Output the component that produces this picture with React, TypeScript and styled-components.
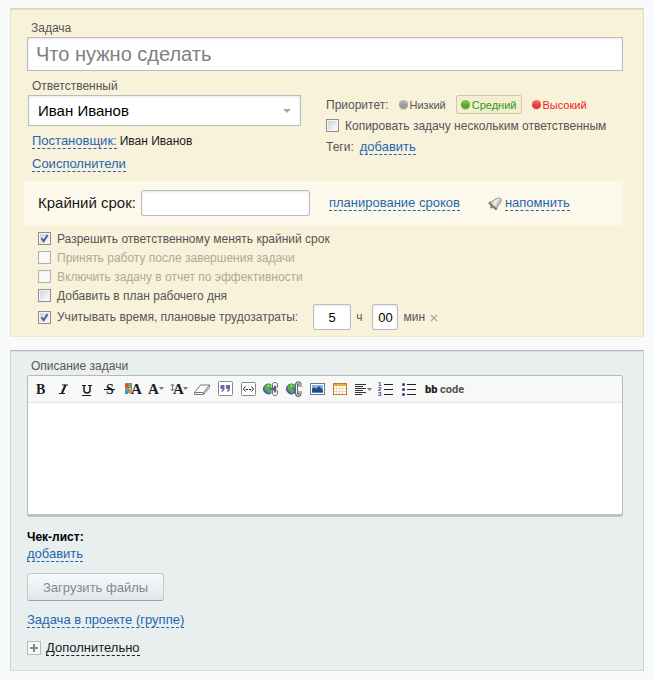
import React from "react";
import styled, { createGlobalStyle, css } from "styled-components";

const GlobalStyle = createGlobalStyle`
  * { box-sizing: border-box; }
  body {
    margin: 0;
    background: #f9fafc;
    color: #555;
    font: 12px/16px "Liberation Sans", Arial, sans-serif;
  }
  input, select, button, textarea { font-family: inherit; }
`;

const Form = styled.form`
  display: flex;
  flex-direction: column;
  gap: 13px;
  padding: 8px 10px;
`;

const Panel = styled.section<{ $tone: "sand" | "mist" }>`
  padding: 11px 20px 6px 16px;
  border: 1px solid;
  ${(p) =>
    p.$tone === "sand"
      ? css`
          background: #f8f2db;
          border-color: #dcd7b1 #e6e0c2 #efe8cb #e6e0c2;
          box-shadow: inset 0 1px 1px #e6e0bf;
        `
      : css`
          padding: 7px 20px 14px 16px;
          background: #e9efef;
          border-color: #b1b9ba #cdd3d4 #d3dbdc #cdd3d4;
          box-shadow: inset 0 1px 1px #d5dcdd;
        `}
`;

const FieldLabel = styled.label`
  display: block;
  padding: 0 4px;
`;

const boxed = css`
  border: 1px solid #b9bcc2;
  background: #fff;
  color: #000;
  box-shadow: inset 0 1px 3px #e6e6e8;
  outline: none;
`;

const TitleInput = styled.input`
  ${boxed}
  display: block;
  width: 100%;
  height: 34px;
  margin-top: 1px;
  padding: 0 8px;
  font-size: 20px;
  &::placeholder { color: #808080; opacity: 1; }
`;

const Columns = styled.div`
  display: grid;
  grid-template-columns: 274px 1fr;
  column-gap: 25px;
  margin-top: 7px;
`;

const Person = styled.div`
  padding-left: 1px;
`;

const SelectBox = styled.div`
  display: grid;
  align-items: center;
  margin-top: 1px;
  > * { grid-area: 1 / 1; }
  svg { justify-self: end; margin-right: 10px; pointer-events: none; }
`;

const PersonSelect = styled.select`
  ${boxed}
  appearance: none;
  width: 100%;
  height: 31px;
  padding: 0 9px;
  border-radius: 0;
  font-size: 15px;
`;

const Line = styled.div`
  display: flex;
  align-items: center;
  gap: 3px;
  margin-top: 7px;
  padding-left: 4px;
  color: #1a1a1a;
`;

const Link = styled.a<{ $dark?: boolean }>`
  color: ${(p) => (p.$dark ? "#1a1a1a" : "#1f67b0")};
  border-bottom: 1px dashed;
  font-size: 13px;
  line-height: 15px;
  text-decoration: none;
`;

const Options = styled.div`
  display: flex;
  flex-direction: column;
  padding-top: 17px;
`;

const Priorities = styled.div`
  display: flex;
  align-items: center;
  height: 19px;
  margin-bottom: 2px;
`;

const Priority = styled.button<{ $color: string; $active?: boolean }>`
  display: flex;
  align-items: center;
  gap: 2px;
  height: 19px;
  margin-left: 5px;
  padding: 0 4px;
  border: 1px solid ${(p) => (p.$active ? "#cfca9f" : "transparent")};
  border-radius: 2px;
  background: ${(p) => (p.$active ? "#f3efd0" : "transparent")};
  color: ${(p) => p.$color};
  font-size: 11px;
`;

const Dot = styled.span<{ $tone: string }>`
  width: 9px;
  height: 9px;
  border-radius: 50%;
  background: linear-gradient(#ffffff55, transparent 60%), ${(p) => p.$tone};
  box-shadow: 0 1px 1px #0002;
`;

const CheckLabel = styled.label<{ $off?: boolean }>`
  display: flex;
  align-items: center;
  gap: 6px;
  height: 19px;
  color: ${(p) => (p.$off ? "#aeaa98" : "#555")};
`;

const tick =
  "url(\"data:image/svg+xml,%3Csvg xmlns='http://www.w3.org/2000/svg' viewBox='0 0 11 11'%3E%3Cpath d='M2.5 5.2L4.7 8.3L8.6 2' fill='none' stroke='%234a5f97' stroke-width='2'/%3E%3C/svg%3E\")";

const Check = styled.input`
  appearance: none;
  flex: none;
  width: 13px;
  height: 13px;
  margin: 0;
  border: 1px solid #8e8f8f;
  background: linear-gradient(135deg, #c9ced6, #f4f5f6 75%);
  box-shadow: inset 0 0 0 1px #f4f4f4;
  &:checked { background: ${tick}, linear-gradient(135deg, #c9ced6, #f4f5f6 75%); }
  &:disabled { border-color: #b1b1b1; background: #f8f8f6; }
`;

const Tags = styled.div`
  display: flex;
  align-items: center;
  gap: 6px;
  height: 23px;
`;

const Deadline = styled.div`
  display: flex;
  align-items: center;
  height: 44px;
  margin: 9px 0 4px -3px;
  padding-left: 14px;
  background: #fdf9ea;
  > label { color: #1a1a1a; font-size: 15px; margin-right: 5px; }
`;

const TextInput = styled.input<{ $width: number; $center?: boolean }>`
  ${boxed}
  flex: none;
  width: ${(p) => p.$width}px;
  height: 26px;
  padding: 0 4px;
  border-radius: 2px;
  font-size: 13px;
  text-align: ${(p) => (p.$center ? "center" : "left")};
`;

const PlanLink = styled(Link)`
  margin: 0 28px 0 19px;
`;

const Remind = styled.span`
  display: flex;
  align-items: center;
  gap: 3px;
`;

const Checks = styled.div`
  padding-left: 11px;
`;

const TimeRow = styled.div`
  display: flex;
  align-items: center;
  height: 26px;
  margin-top: -1px;
`;

const Hours = styled.div`
  display: flex;
  align-items: center;
  margin-left: 15px;
  gap: 5px;
  > label:first-of-type { margin-right: 5px; }
`;

const ClearButton = styled.button`
  display: flex;
  padding: 2px 0 0;
  border: 0;
  background: none;
`;

const Editor = styled.div`
  margin-top: 1px;
  border: 1px solid #b4bac0;
  border-bottom: 3px solid #bfc2c3;
  border-radius: 3px;
  background: #fff;
`;

const Toolbar = styled.div`
  display: flex;
  height: 27px;
  padding-left: 1px;
  border-bottom: 1px solid #e4e6e6;
  border-radius: 3px 3px 0 0;
  background: #f8f8f8;
`;

const Tool = styled.button`
  display: flex;
  align-items: center;
  justify-content: center;
  width: 23px;
  padding: 0;
  border: 0;
  background: none;
`;

const CodeMode = styled.button`
  padding: 0 5px;
  border: 0;
  background: none;
  color: #555;
  font-weight: bold;
  font-size: 11px;
  white-space: nowrap;
  && { font-family: Roboto, sans-serif; }
  b { color: #222; }
`;

const TextArea = styled.textarea`
  display: block;
  width: 100%;
  height: 111px;
  padding: 8px;
  border: 0;
  outline: none;
  resize: none;
  background: transparent;
`;

const Heading = styled.h2`
  margin: 12px 0 1px;
  color: #000;
  font-size: 12px;
  line-height: 16px;
`;

const Upload = styled.button`
  display: block;
  height: 28px;
  margin: 11px 0;
  padding: 0 15px;
  border: 1px solid #c3cacc;
  border-bottom-color: #98a2a4;
  border-radius: 3px;
  background: linear-gradient(#f8fafa, #dfe7eb);
  color: #85878f;
  font-size: 13px;
`;

const More = styled.div`
  display: flex;
  align-items: center;
  gap: 5px;
  margin-top: 12px;
`;

const Expand = styled.button`
  display: flex;
  align-items: center;
  justify-content: center;
  width: 14px;
  height: 14px;
  padding: 0;
  border: 1px solid #b5babb;
  background: #fafafa;
`;

const Bell = () => (
  <svg width="14" height="15" viewBox="0 0 14 15" aria-hidden="true">
    <defs>
      <linearGradient id="bell" x1="0" y1="0.2" x2="1" y2="0.8">
        <stop offset="0.1" stopColor="#a9a89e" />
        <stop offset="0.45" stopColor="#f4f4f0" />
        <stop offset="0.85" stopColor="#9b9a92" />
      </linearGradient>
    </defs>
    <path d="M1 6.5C4 6.5 6 3 9 2.5C11 2 12.5 2 13 2.8C13.4 4 13 6 11.7 7.8C10 10 9 10.5 8.5 14Z" fill="url(#bell)" stroke="#96958c" />
    <path d="M1 6.8L8.3 13.6" stroke="#77766f" strokeWidth="2" />
    <circle cx="3.5" cy="11" r="1.5" fill="#8c8b80" />
  </svg>
);

const Letter = ({ x, size = 15, children }: { x: number; size?: number; children: string }) => (
  <text x={x} y="13" fontFamily="Liberation Serif" fontWeight="bold" fontSize={size} fill="#1c1c1c">{children}</text>
);

const Svg = ({ children, w = 16 }: { children: React.ReactNode; w?: number }) => (
  <svg width={w} height="16" viewBox={`0 0 ${w} 16`} aria-hidden="true">{children}</svg>
);

const Globe = ({ closed }: { closed?: boolean }) => (
  <Svg>
    <circle cx="5.5" cy="8" r="5" fill="#4a6bc8" stroke="#3a4c98" />
    <path d="M2 5L5 3L9 4L9 6L6 8L8 10L6 12.5L4 10L1.500 8Z" fill="#5cb82a" />
    <path d="M4 4L6 3.5L7 5L5 6Z" fill="#a6da7c" />
    {closed ? (
      <g fill="none">
        <path d="M10.5 7V3.5C10.5 1 14.5 1 14.5 3.5V7M10.5 9V12.5C10.5 15 14.5 15 14.5 12.5V9" stroke="#f8f8f8" strokeWidth="4" />
        <path d="M9.5 7V3.5C9.500 .8 14.5 .8 14.5 3.5V6C14.5 7.500 9.5 7.500 9.5 6M9.5 10C9.5 8.500 14.5 8.500 14.5 10V12.5C14.5 15.200 9.5 15.200 9.5 12.5V9.5" stroke="#6a6a6a" />
        <path d="M12 4.500V11.500" stroke="#4b4b4b" strokeWidth="1.5" />
      </g>
    ) : (
      <g fill="none">
        <path d="M14 6V3.5C14 1 10.5 1 10.5 3.5V12.5C10.5 15 14 15 14 12.5V10" stroke="#666" strokeWidth="3" />
        <path d="M14 6V3.5C14 1 10.5 1 10.5 3.5V12.5C10.5 15 14 15 14 12.5V10" stroke="#f4f4f4" />
      </g>
    )}
  </Svg>
);

const tools: { name: string; icon: React.ReactNode }[] = [
  { name: "Полужирный", icon: <Svg><Letter x={3} size={14}>B</Letter></Svg> },
  {
    name: "Курсив",
    icon: (
      <Svg>
        <path d="M6 4H12M3 12.5H9M9.5 4L5.5 12.5" fill="none" stroke="#1c1c1c" />
        <path d="M9.5 4L6 12" stroke="#1c1c1c" strokeWidth="2" />
      </Svg>
    ),
  },
  {
    name: "Подчёркнутый",
    icon: (
      <Svg>
        <path d="M3 4.5H7M9 4.5H13M3 14.5H12" stroke="#1c1c1c" />
        <path d="M5 4V9C5 13 11 13 11 9V4" fill="none" stroke="#1c1c1c" strokeWidth="1.5" />
      </Svg>
    ),
  },
  {
    name: "Зачёркнутый",
    icon: <Svg><Letter x={4} size={14}>S</Letter><path d="M2 8.5H13" stroke="#1c1c1c" /></Svg>,
  },
  {
    name: "Цвет",
    icon: (
      <Svg w={18}>
        <path d="M1 2h7v10H1z" fill="#8a8a8a" />
        <path d="M1 3h3v3H1z" fill="#f0442b" /><path d="M5 3h2v3H5z" fill="#6fb54a" />
        <path d="M1 7h3v2H1z" fill="#4fbf5b" /><path d="M5 7h2v2H5z" fill="#f7c62f" />
        <path d="M1 10h3v3H1z" fill="#3b8ff0" /><path d="M5 10h2v3H5z" fill="#f09a3a" />
        <Letter x={7}>A</Letter>
      </Svg>
    ),
  },
  { name: "Шрифт", icon: <Svg><Letter x={0}>A</Letter><path d="M11 6h5l-2.5 3z" fill="#777" /></Svg> },
  {
    name: "Размер",
    icon: (
      <Svg w={18}>
        <path d="M2.5 3v7M.5 5l2-2 2 2M.5 8l2 2 2-2" fill="none" stroke="#777" />
        <Letter x={3}>A</Letter>
        <path d="M13 6h5l-2.5 3z" fill="#777" />
      </Svg>
    ),
  },
  {
    name: "Очистить",
    icon: <Svg><path d="M.5 11.5L6.5 4H15.5L9.5 11.5ZM.5 11.5V13.500H9.5V11.5M9.5 13.500L15.5 6.500V4" fill="#fcfcfc" stroke="#777" /></Svg>,
  },
  {
    name: "Цитата",
    icon: (
      <Svg>
        <rect x="1.5" y=".5" width="14" height="14" rx="1" fill="#fff" stroke="#8a8a8a" />
        <path d="M3.5 4h4v3.5C7.5 9.5 6.5 10.5 4.5 11V9.5C5.5 9 5.7 8.5 5.7 8H3.5ZM9 4h4v3.5C13 9.5 12 10.5 10 11V9.5C11 9 11.2 8.5 11.2 8H9Z" fill="#686ba0" />
      </Svg>
    ),
  },
  {
    name: "Код",
    icon: (
      <Svg>
        <rect x="1.5" y="1.5" width="14" height="13" rx="1" fill="#fff" stroke="#8a8a8a" />
        <path d="M5.5 5.5L3.5 8L5.5 10.5M11.5 5.5L13.5 8L11.5 10.5" fill="none" stroke="#222" />
        <path d="M6 8h2v1H6zM9 8h2v1H9z" fill="#222" />
      </Svg>
    ),
  },
  { name: "Ссылка", icon: <Globe closed /> },
  { name: "Убрать ссылку", icon: <Globe /> },
  {
    name: "Изображение",
    icon: (
      <Svg>
        <rect x="1.5" y="2.5" width="14" height="11" fill="#fff" stroke="#777" />
        <rect x="3" y="4" width="11" height="8" fill="#82b5ea" />
        <path d="M3 11V8L5 6L7 8L10 5L14 9V11Z" fill="#204a88" />
        <path d="M3 11h11v1H3z" fill="#4d85c5" />
      </Svg>
    ),
  },
  {
    name: "Таблица",
    icon: (
      <Svg>
        <rect x="1.5" y="2.5" width="13" height="11" fill="#fff" stroke="#c77a20" />
        <path d="M2 3h12v2H2z" fill="#ecac3e" />
        <path d="M4.5 5v8M7.5 5v8M10.5 5v8M2 7.5h12M2 10.5h12" stroke="#ead7b4" />
      </Svg>
    ),
  },
  {
    name: "Выравнивание",
    icon: (
      <Svg w={18}>
        <path d="M1 3.5h11M1 5.5h8M1 7.5h11M1 9.5h8M1 11.5h11M1 13.5h7" stroke="#333" />
        <path d="M13 7h5l-2.5 3z" fill="#777" />
      </Svg>
    ),
  },
  {
    name: "Нумерованный список",
    icon: (
      <Svg>
        <path d="M6 3.5h9M6 8.5h9M6 13.5h9" stroke="#222" />
        <g fontFamily="Liberation Sans" fontWeight="bold" fontSize="6" fill="#34359b">
          <text x="0" y="5">1</text><text x="0" y="10">2</text><text x="0" y="15">3</text>
        </g>
      </Svg>
    ),
  },
  {
    name: "Список",
    icon: (
      <Svg>
        <path d="M6 3.5h9M6 8.5h9M6 13.5h9" stroke="#222" />
        <circle cx="2.5" cy="3.5" r="1.5" fill="#34359b" />
        <circle cx="2.5" cy="8.5" r="1.5" fill="#34359b" />
        <circle cx="2.5" cy="13.5" r="1.5" fill="#34359b" />
      </Svg>
    ),
  },
];

export default function App() {
  return (
    <>
      <GlobalStyle />
      <Form onSubmit={(e) => e.preventDefault()}>
        <Panel $tone="sand">
          <FieldLabel htmlFor="title">Задача</FieldLabel>
          <TitleInput id="title" placeholder="Что нужно сделать" />
          <Columns>
            <Person>
              <FieldLabel htmlFor="person">Ответственный</FieldLabel>
              <SelectBox>
                <PersonSelect id="person"><option>Иван Иванов</option></PersonSelect>
                <svg width="8" height="4" viewBox="0 0 8 4"><path d="M0 0h8L4 4z" fill="#aaa" /></svg>
              </SelectBox>
              <Line><Link href="#director">Постановщик:</Link> Иван Иванов</Line>
              <Line><Link href="#assistants">Соисполнители</Link></Line>
            </Person>
            <Options>
              <Priorities>
                Приоритет:
                <Priority type="button" $color="#555"><Dot $tone="#999" />Низкий</Priority>
                <Priority type="button" $color="#2c9a12" $active><Dot $tone="#57a828" />Средний</Priority>
                <Priority type="button" $color="#ee1c24"><Dot $tone="#ee3636" />Высокий</Priority>
              </Priorities>
              <CheckLabel><Check type="checkbox" />Копировать задачу нескольким ответственным</CheckLabel>
              <Tags>Теги: <Link href="#tags">добавить</Link></Tags>
            </Options>
          </Columns>
          <Deadline>
            <label htmlFor="deadline">Крайний срок:</label>
            <TextInput id="deadline" $width={169} />
            <PlanLink href="#plan">планирование сроков</PlanLink>
            <Remind><Bell /><Link href="#remind">напомнить</Link></Remind>
          </Deadline>
          <Checks>
            <CheckLabel><Check type="checkbox" defaultChecked />Разрешить ответственному менять крайний срок</CheckLabel>
            <CheckLabel $off><Check type="checkbox" disabled />Принять работу после завершения задачи</CheckLabel>
            <CheckLabel $off><Check type="checkbox" disabled />Включить задачу в отчет по эффективности</CheckLabel>
            <CheckLabel><Check type="checkbox" />Добавить в план рабочего дня</CheckLabel>
            <TimeRow>
              <CheckLabel><Check type="checkbox" defaultChecked />Учитывать время, плановые трудозатраты:</CheckLabel>
              <Hours>
                <TextInput id="hours" $width={38} $center defaultValue="5" />
                <label htmlFor="hours">ч</label>
                <TextInput id="minutes" $width={26} $center defaultValue="00" />
                <label htmlFor="minutes">мин</label>
                <ClearButton type="button" aria-label="Очистить время">
                  <svg width="8" height="8" viewBox="0 0 8 8"><path d="M1 1L7 7M7 1L1 7" stroke="#aaa9a0" strokeWidth="1.3" /></svg>
                </ClearButton>
              </Hours>
            </TimeRow>
          </Checks>
        </Panel>
        <Panel $tone="mist">
          <FieldLabel htmlFor="description">Описание задачи</FieldLabel>
          <Editor>
            <Toolbar role="toolbar">
              {tools.map((t) => (
                <Tool key={t.name} type="button" aria-label={t.name}>{t.icon}</Tool>
              ))}
              <CodeMode type="button"><b>bb</b> code</CodeMode>
            </Toolbar>
            <TextArea id="description" />
          </Editor>
          <Heading>Чек-лист:</Heading>
          <Link href="#checklist">добавить</Link>
          <Upload type="button">Загрузить файлы</Upload>
          <Link href="#project">Задача в проекте (группе)</Link>
          <More>
            <Expand type="button" aria-label="Развернуть">
              <svg width="8" height="8" viewBox="0 0 8 8"><path d="M4 0v8M0 4h8" stroke="#85888f" strokeWidth="2" /></svg>
            </Expand>
            <Link href="#more" $dark>Дополнительно</Link>
          </More>
        </Panel>
      </Form>
    </>
  );
}
